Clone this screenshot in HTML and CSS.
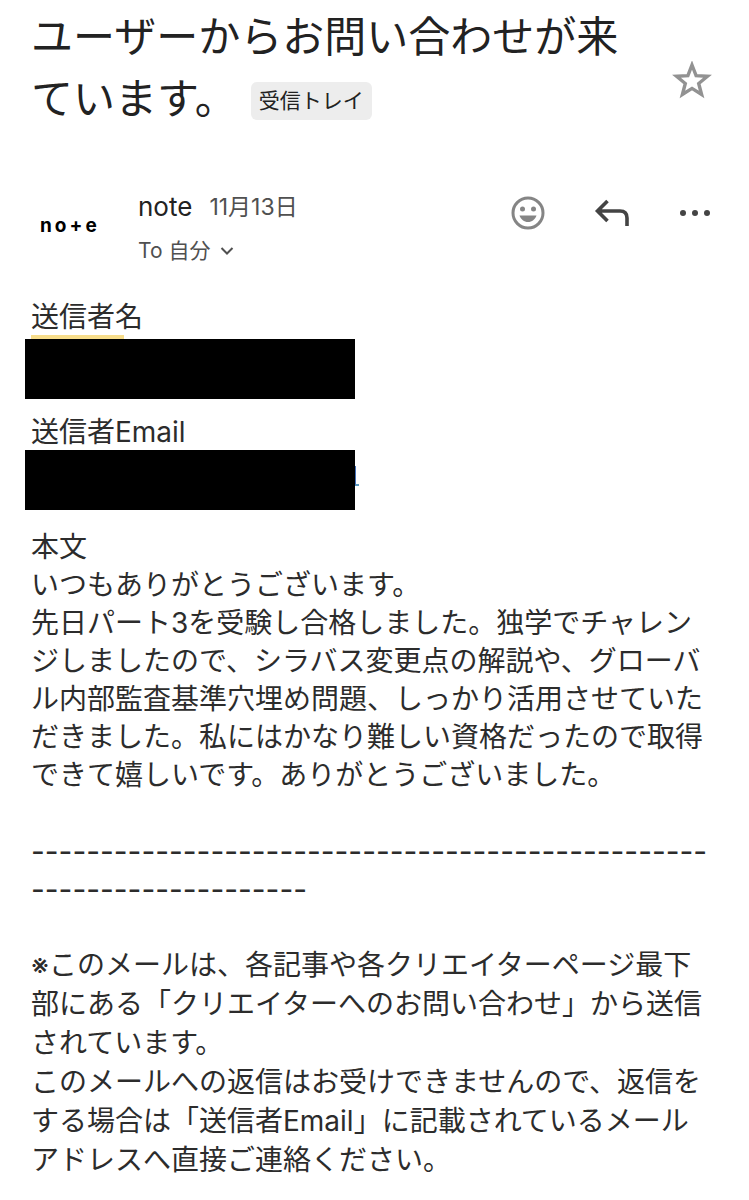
FILE: index.html
```html
<!DOCTYPE html>
<html lang="ja">
<head>
<meta charset="utf-8">
<meta name="viewport" content="width=device-width, initial-scale=1">
<title>ユーザーからお問い合わせが来ています。</title>
<link rel="stylesheet" href="styles.css">
</head>
<body>
<main class="mail">
  <header class="subject">
    <h1 class="subject-title">ユーザーからお問い合わせが来<br>ています。<span class="label">受信トレイ</span></h1>
    <button class="icon-button star" type="button" aria-label="スター">
      <svg width="40" height="38" viewBox="0 0 40 38" fill="none" stroke="#929292" stroke-width="3.4"><path d="M20 4 24.1 14.6 35.500 15.300 26.700 22.500 29.600 33.500 20 27.400 10.400 33.500 13.300 22.500 4.500 15.300 15.900 14.600Z"/></svg>
    </button>
  </header>
  <section class="sender">
    <div class="avatar"><span>n</span><span>o</span><span>+</span><span>e</span></div>
    <div class="sender-info">
      <div class="sender-line"><span class="sender-name">note</span><time class="date">11月13日</time></div>
      <button class="recipient" type="button">To 自分
        <svg width="14" height="10" viewBox="0 0 14 10" fill="none" stroke="#505050" stroke-width="2"><path d="M1.500 2 7 7.500 12.500 2"/></svg>
      </button>
    </div>
    <div class="actions">
      <button class="icon-button" type="button" aria-label="リアクション">
        <svg width="34" height="34" viewBox="0 0 34 34" fill="none" stroke="#858585" stroke-width="3"><circle cx="17" cy="17" r="15"/><circle cx="11.500" cy="13" r="2.500" fill="#858585" stroke="none"/><circle cx="22.500" cy="13" r="2.500" fill="#858585" stroke="none"/><path d="M8.500 19.500h17c-1.500 4-4.500 6.500-8.500 6.500s-7-2.500-8.500-6.500Z" fill="#858585" stroke="none"/></svg>
      </button>
      <button class="icon-button" type="button" aria-label="返信">
        <svg width="36" height="30" viewBox="0 0 36 30" fill="none" stroke="#444" stroke-width="3.600"><path d="M13.500 3 3.500 13 13.500 23M3.500 13H26q7 0 7 7V28"/></svg>
      </button>
      <button class="icon-button" type="button" aria-label="その他">
        <svg width="32" height="8" viewBox="0 0 32 8" fill="#444"><circle cx="4" cy="4" r="3"/><circle cx="16" cy="4" r="3"/><circle cx="28" cy="4" r="3"/></svg>
      </button>
    </div>
  </section>
  <article class="body">
    <h2 class="field">送信者名</h2>
    <div class="marker"></div>
    <div class="redacted"></div>
    <h2 class="field">送信者Email</h2>
    <div class="redacted redacted-link"></div>
    <h2 class="field">本文</h2>
    <p class="text">いつもありがとうございます。<br>先日パート3を受験し合格しました。独学でチャレン<br>ジしましたので、シラバス変更点の解説や、グローバ<br>ル内部監査基準穴埋め問題、しっかり活用させていた<br>だきました。私にはかなり難しい資格だったので取得<br>できて嬉しいです。ありがとうございました。</p>
    <p class="text rule">-------------------------------------------------<br>--------------------</p>
    <p class="text notice">※このメールは、各記事や各クリエイターページ最下<br>部にある「クリエイターへのお問い合わせ」から送信<br>されています。<br>このメールへの返信はお受けできませんので、返信を<br>する場合は「送信者Email」に記載されているメール<br>アドレスへ直接ご連絡ください。</p>
  </article>
</main>
</body>
</html>
```
FILE: styles.css
```css
* { box-sizing: border-box; }
body { margin: 0; background: #fff; color: #222; font-family: Inter, "Noto Sans CJK JP", sans-serif; }
.mail { padding: 6px 0 24px 31px; }
.subject { display: flex; align-items: center; justify-content: space-between; padding-right: 37px; }
.subject-title { margin: 0; font-size: 42px; line-height: 62px; font-weight: 400; white-space: nowrap; }
.label { display: inline-block; margin: 0 0 4px 14px; padding: 0 8px; border-radius: 6px; background: #ededed; font-size: 21px; line-height: 38px; vertical-align: middle; }
.icon-button { display: flex; padding: 0; border: 0; background: none; }
.star { margin-top: 24px; }
.sender { display: flex; margin-top: 54px; padding-right: 38px; }
.avatar { display: flex; gap: 3px; width: 107px; padding: 30px 0 0 9px; color: #000; font: 700 19px/24px Inter, sans-serif; }
.sender-info { flex: 1; }
.sender-line { display: flex; align-items: center; gap: 17px; line-height: 46px; }
.sender-name { font-size: 26px; }
.date { font-size: 23px; color: #505050; }
.recipient { display: flex; align-items: center; gap: 10px; padding: 0; border: 0; background: none; color: #505050; font: inherit; font-size: 21px; line-height: 42px; }
.actions { display: flex; align-items: center; height: 58px; gap: 49px; }
.body { margin-top: 26px; color: #2c2c2c; font-size: 28px; line-height: 38px; }
.field { margin: 0; font-size: 28px; font-weight: 400; line-height: 38px; }
.marker { width: 93px; height: 4px; margin-top: -1px; background: #f7dd8b; }
.redacted { width: 330px; height: 60px; margin: 0 0 14px -6px; background: #000; }
.redacted-link { position: relative; margin-top: -1px; margin-bottom: 18px; }
.redacted-link::after { content: ""; position: absolute; left: 100%; top: 16px; width: 3px; height: 18px; border-bottom: 2px solid #5b9abf; border-left: 1px solid #4470b8; }
.text { margin: 0 0 38px; white-space: nowrap; }
.rule { font-size: 30px; }
.notice { line-height: 39px; }
```
